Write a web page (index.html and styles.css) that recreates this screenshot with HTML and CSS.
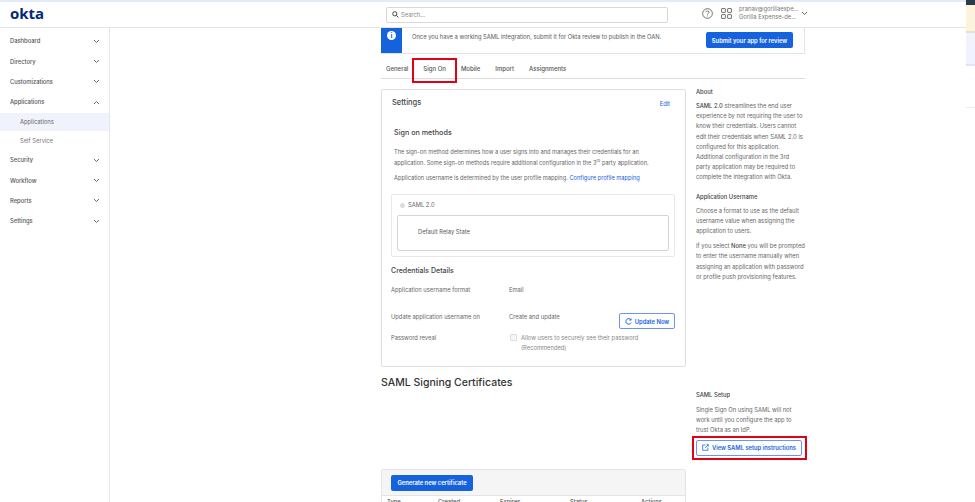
FILE: index.html
```html
<!DOCTYPE html>
<html lang="en">
<head>
    <meta charset="UTF-8">
    <title>Okta - Sign On</title>
    <link rel="stylesheet" href="styles.css">
</head>
<body>
    <div class="topline"></div>
    <header class="topbar">
        <div class="logo">okta</div>
        <div class="search">
            <svg width="7" height="7" viewBox="0 0 10 10" fill="none" stroke="#444" stroke-width="1.4"><circle cx="4" cy="4" r="3"/><path d="M6.200 6.200L9.200 9.200"/></svg>
            <span>Search...</span>
        </div>
        <div class="top-right">
            <svg width="11" height="11" viewBox="0 0 12 12" fill="none" stroke="#555" stroke-width="0.9"><circle cx="6" cy="6" r="5.300"/><path d="M4.300 4.700C4.300 2.700 7.700 2.700 7.700 4.600C7.700 5.800 6 5.800 6 7.300"/><path d="M6 8.300V9.200"/></svg>
            <svg class="grid-icon" width="11" height="11" viewBox="0 0 12 12" fill="none" stroke="#555" stroke-width="0.9"><rect x="0.600" y="0.600" width="4.200" height="4.200" rx="0.500"/><rect x="7.200" y="0.600" width="4.200" height="4.200" rx="0.500"/><rect x="0.600" y="7.200" width="4.200" height="4.200" rx="0.500"/><rect x="7.200" y="7.200" width="4.200" height="4.200" rx="0.500"/></svg>
            <div class="user">
                <div>pranav@gorillaexpe...</div>
                <div>Gorilla Expense-de...</div>
            </div>
            <svg class="chev" width="7" height="5" viewBox="0 0 7 5"><path d="M1 1l2.500 2.500L6 1"/></svg>
        </div>
    </header>
    <div class="layout">
        <nav class="sidebar">
            <div class="nav-item">Dashboard <svg class="chev" width="7" height="5" viewBox="0 0 7 5"><path d="M1 1l2.500 2.500L6 1"/></svg></div>
            <div class="nav-item">Directory <svg class="chev" width="7" height="5" viewBox="0 0 7 5"><path d="M1 1l2.500 2.500L6 1"/></svg></div>
            <div class="nav-item">Customizations <svg class="chev" width="7" height="5" viewBox="0 0 7 5"><path d="M1 1l2.500 2.500L6 1"/></svg></div>
            <div class="nav-item">Applications <svg class="chev" width="7" height="5" viewBox="0 0 7 5"><path d="M1 4l2.500-2.500L6 4"/></svg></div>
            <div class="nav-sub active">Applications</div>
            <div class="nav-sub">Self Service</div>
            <div class="nav-item">Security <svg class="chev" width="7" height="5" viewBox="0 0 7 5"><path d="M1 1l2.500 2.500L6 1"/></svg></div>
            <div class="nav-item">Workflow <svg class="chev" width="7" height="5" viewBox="0 0 7 5"><path d="M1 1l2.500 2.500L6 1"/></svg></div>
            <div class="nav-item">Reports <svg class="chev" width="7" height="5" viewBox="0 0 7 5"><path d="M1 1l2.500 2.500L6 1"/></svg></div>
            <div class="nav-item">Settings <svg class="chev" width="7" height="5" viewBox="0 0 7 5"><path d="M1 1l2.500 2.500L6 1"/></svg></div>
        </nav>
        <main class="main">
            <div class="banner">
                <div class="banner-icon"><span>i</span></div>
                <p>Once you have a working SAML integration, submit it for Okta review to publish in the OAN.</p>
                <button class="btn-primary">Submit your app for review</button>
            </div>
            <div class="tabs">
                <span class="tab">General</span>
                <span class="tab tab-on">Sign On</span>
                <span class="tab">Mobile</span>
                <span class="tab">Import</span>
                <span class="tab">Assignments</span>
            </div>
            <div class="columns">
                <div class="left">
                    <section class="card">
                        <div class="card-head">
                            <h2>Settings</h2>
                            <a class="link">Edit</a>
                        </div>
                        <h3 class="methods-title">Sign on methods</h3>
                        <p class="methods-text">The sign-on method determines how a user signs into and manages their credentials for an<br>application. Some sign-on methods require additional configuration in the 3<sup>rd</sup> party application.</p>
                        <p class="methods-text note">Application username is determined by the user profile mapping. <a class="link">Configure profile mapping</a></p>
                        <div class="method-box">
                            <div class="radio-row"><span class="radio"></span>SAML 2.0</div>
                            <div class="relay">Default Relay State</div>
                        </div>
                        <h3 class="cred-title">Credentials Details</h3>
                        <div class="cred-row r1"><span class="cred-label">Application username format</span><span>Email</span></div>
                        <div class="cred-row r2">
                            <span class="cred-label">Update application username on</span><span>Create and update</span>
                            <button class="btn-update">
                                <svg width="7" height="7" viewBox="0 0 10 10" fill="none" stroke="#1662dd" stroke-width="1.4"><path d="M8.500 2.600A4 4 0 1 0 8.900 6.500"/><path d="M8.800 0.600V3.200H6.200" stroke-width="1"/></svg>
                                Update Now
                            </button>
                        </div>
                        <div class="cred-row r3">
                            <span class="cred-label">Password reveal</span>
                            <span class="check"></span>
                            <span class="check-text">Allow users to securely see their password<br>(Recommended)</span>
                        </div>
                    </section>
                    <h2 class="certs-title">SAML Signing Certificates</h2>
                    <section class="certs">
                        <div class="certs-bar"><button class="btn-primary">Generate new certificate</button></div>
                        <div class="certs-cols">
                            <span class="c1">Type</span><span class="c2">Created</span><span class="c3">Expires</span><span class="c4">Status</span><span class="c5">Actions</span>
                        </div>
                    </section>
                </div>
                <aside class="help">
                    <h4>About</h4>
                    <p><b>SAML 2.0</b> streamlines the end user<br>experience by not requiring the user to<br>know their credentials. Users cannot<br>edit their credentials when SAML 2.0 is<br>configured for this application.<br>Additional configuration in the 3rd<br>party application may be required to<br>complete the integration with Okta.</p>
                    <h4>Application Username</h4>
                    <p>Choose a format to use as the default<br>username value when assigning the<br>application to users.</p>
                    <p>If you select <b>None</b> you will be prompted<br>to enter the username manually when<br>assigning an application with password<br>or profile push provisioning features.</p>
                    <h4 class="setup-title">SAML Setup</h4>
                    <p class="setup-text">Single Sign On using SAML will not<br>work until you configure the app to<br>trust Okta as an IdP.</p>
                    <button class="btn-setup">
                        <svg width="7" height="7" viewBox="0 0 10 10" fill="none" stroke="#1662dd" stroke-width="1.1"><path d="M5 1.500H1V9H8.500V5"/><path d="M4.500 5.500L9 1M6.500 1H9V3.500"/></svg>
                        View SAML setup instructions
                    </button>
                </aside>
            </div>
        </main>
    </div>
    <div class="edge">
        <div class="edge-dark"></div>
        <div class="edge-cream"></div>
        <div class="edge-blue"></div>
        <div class="edge-line"></div>
    </div>
</body>
</html>
```

FILE: styles.css
```css
* {
    box-sizing: border-box;
}
body {
    margin: 0;
    height: 502px;
    overflow: hidden;
    position: relative;
    background: #fff;
    color: #666;
    font-family: "Inter", "Liberation Sans", sans-serif;
    font-size: 5.8px;
    line-height: 10px;
}
.topline {
    height: 2px;
    background: #e3eaf9;
}
.topbar {
    height: 26px;
    display: flex;
    align-items: center;
    border-bottom: 1px solid #e4e4e4;
    padding-left: 10px;
}
.logo {
    width: 376px;
    font-family: "Open Sans", sans-serif;
    font-size: 15px;
    font-weight: 700;
    color: #00297a;
    line-height: 1;
    padding-bottom: 3px;
}
.search {
    width: 282px;
    height: 16px;
    display: flex;
    align-items: center;
    gap: 2px;
    padding-left: 5px;
    border: 1px solid #d8d8d8;
    border-radius: 2px;
    color: #888;
}
.top-right {
    display: flex;
    align-items: center;
    margin-left: 34px;
    padding-bottom: 3px;
}
.grid-icon {
    margin-left: 8px;
}
.user {
    margin-left: 7px;
    width: 62px;
    line-height: 8px;
    color: #777;
}
.chev {
    fill: none;
    stroke: #666;
    stroke-width: 1;
}
.layout {
    display: flex;
    height: 474px;
}
.sidebar {
    width: 110px;
    flex: none;
    border-right: 1px solid #e6e6e6;
    padding-top: 3px;
}
.nav-item {
    height: 20.400px;
    display: flex;
    align-items: center;
    justify-content: space-between;
    padding: 0 9px 0 10px;
    font-weight: 500;
    color: #555;
}
.nav-sub {
    height: 18.700px;
    display: flex;
    align-items: center;
    padding-left: 20px;
    color: #777;
}
.nav-sub.active {
    background: #f1f3fc;
    color: #666;
}
.main {
    width: 424px;
    margin-left: 271px;
    flex: none;
}
.banner {
    height: 26px;
    display: flex;
    align-items: flex-start;
    border-right: 1px solid #e4e4e4;
    border-bottom: 1px solid #e4e4e4;
}
.banner-icon {
    width: 21px;
    height: 25px;
    background: #1662dd;
    flex: none;
    padding-top: 3px;
}
.banner-icon span {
    display: block;
    width: 9px;
    height: 9px;
    margin: 0 auto;
    border-radius: 50%;
    background: #fff;
    color: #1662dd;
    font-size: 7px;
    font-weight: 700;
    line-height: 9px;
    text-align: center;
}
.banner p {
    margin: 0 0 0 10px;
    padding-top: 4px;
    white-space: nowrap;
    color: #5a5a5a;
}
.btn-primary {
    height: 16px;
    padding: 0;
    border: 0;
    border-radius: 2px;
    background: #1662dd;
    color: #fff;
    font-family: inherit;
    font-size: 5.8px;
    font-weight: 600;
    white-space: nowrap;
}
.banner .btn-primary {
    width: 87px;
    margin: 4px 11px 0 auto;
}
.tabs {
    height: 19px;
    display: flex;
    border-bottom: 1px solid #dcdcdc;
    margin-top: 6px;
    padding: 4px 0 0 5px;
    font-size: 6px;
    font-weight: 500;
    color: #555;
}
.tab {
    margin-right: 15px;
}
.tab-on {
    position: relative;
}
/* red annotation drawn on the screenshot */
.tab-on::after {
    content: "";
    position: absolute;
    left: -11px;
    right: -11px;
    top: -6px;
    height: 21px;
    border: 2px solid #e3001b;
}
.columns {
    display: flex;
    gap: 10px;
    margin-top: 8px;
}
.left {
    width: 305px;
    flex: none;
    margin-top: 2px;
}
.card {
    height: 278px;
    border: 1px solid #dedede;
    border-radius: 2px;
    padding: 0 10px;
}
.card-head {
    display: flex;
    justify-content: space-between;
    align-items: center;
    height: 26px;
}
.card-head .link {
    margin: 1px 5px 0 0;
}
.card-head h2 {
    margin: 0;
    font-size: 7.500px;
    font-weight: 500;
    color: #444;
}
.link {
    color: #1662dd;
}
.methods-title {
    margin: 12px 0 0 2px;
    font-size: 7.200px;
    font-weight: 500;
    color: #444;
}
.methods-text {
    margin: 9px 0 0 2px;
    font-size: 5.700px;
    line-height: 10.500px;
}
.methods-text sup {
    font-size: 4px;
    line-height: 0;
}
.methods-text.note {
    margin-top: 5px;
    line-height: 10px;
}
.method-box {
    margin: 11px 0 0 -1px;
    height: 63px;
    border: 1px solid #e8e8e8;
    border-radius: 2px;
    padding: 0 5px;
}
.radio-row {
    height: 20px;
    display: flex;
    align-items: center;
    padding-left: 3px;
}
.radio {
    width: 5px;
    height: 5px;
    border-radius: 50%;
    background: #ddd;
    margin-right: 3px;
}
.relay {
    height: 36px;
    border: 1px solid #d4d4d4;
    border-radius: 2px;
    padding: 11px 0 0 20px;
    color: #5a5a5a;
}
.cred-title {
    margin: 9px 0 0 -1px;
    font-size: 7px;
    font-weight: 500;
    color: #444;
}
.cred-row {
    display: flex;
    margin-left: -1px;
}
.cred-label {
    width: 118px;
    flex: none;
}
.r1 {
    margin-top: 9px;
    height: 27px;
}
.r2 {
    height: 21px;
}
.btn-update {
    width: 56px;
    height: 16px;
    margin: 1px 0 0 auto;
    padding: 0;
    border: 1px solid #6b97ea;
    border-radius: 2px;
    background: #fff;
    color: #1662dd;
    font-family: inherit;
    font-size: 5.8px;
    font-weight: 600;
    display: flex;
    align-items: center;
    justify-content: center;
    gap: 3px;
}
.check {
    width: 7px;
    height: 7px;
    flex: none;
    margin: 1px 4px 0 1px;
    border: 1px solid #ddd;
    border-radius: 1px;
    background: #f6f6f6;
}
.check-text {
    color: #888;
}
.certs-title {
    margin: 9px 0 0;
    font-size: 10.500px;
    font-weight: 500;
    color: #333;
    line-height: 14px;
}
.certs {
    margin-top: 79px;
    border: 1px solid #e4e4e4;
    border-radius: 2px;
}
.certs-bar {
    height: 26px;
    background: #f5f5f5;
    display: flex;
    align-items: center;
    padding-left: 9px;
    border-bottom: 1px solid #e4e4e4;
}
.certs-bar .btn-primary {
    width: 82px;
}
.certs-cols {
    display: flex;
    padding: 1px 5px 0;
    font-weight: 500;
    color: #555;
}
.c1 { width: 51px; }
.c2 { width: 62px; }
.c3 { width: 70px; }
.c4 { width: 71px; }
.help {
    width: 110px;
    line-height: 10.200px;
    white-space: nowrap;
}
.help h4 {
    margin: 0;
    line-height: 10px;
    font-size: 5.8px;
    font-weight: 500;
    color: #444;
}
.help p {
    margin: 4px 0 0;
}
.help b {
    font-weight: 500;
    color: #444;
}
.help p + h4 {
    margin-top: 9px;
}
.help p + p {
    margin-top: 5px;
}
.help .setup-title {
    margin-top: 108px;
}
.help .setup-text {
    margin-top: 5px;
}
.btn-setup {
    position: relative;
    display: flex;
    align-items: center;
    justify-content: center;
    gap: 3px;
    width: 106px;
    height: 16px;
    margin-top: 4px;
    padding: 0;
    border: 1px solid #6b97ea;
    border-radius: 2px;
    background: #fff;
    color: #1662dd;
    font-family: inherit;
    font-size: 5.8px;
    font-weight: 600;
}
/* red annotation drawn on the screenshot */
.btn-setup::after {
    content: "";
    position: absolute;
    inset: -5px -6px -5px -5px;
    border: 2px solid #e3001b;
}
/* sliver of another window at the right edge of the capture */
.edge {
    position: absolute;
    top: 0;
    right: 0;
    width: 9px;
    height: 109px;
    background: #fff;
}
.edge-dark {
    height: 5px;
    background: #2b3a4a;
}
.edge-cream {
    height: 28px;
    background: #fbf3dc;
    border-bottom: 2px solid #e4e0d4;
}
.edge-blue {
    height: 33px;
    background: #f0f3fd;
    border-bottom: 2px solid #dfe4f8;
}
.edge-line {
    height: 1px;
    margin-top: 41px;
    background: #ececec;
}
```
